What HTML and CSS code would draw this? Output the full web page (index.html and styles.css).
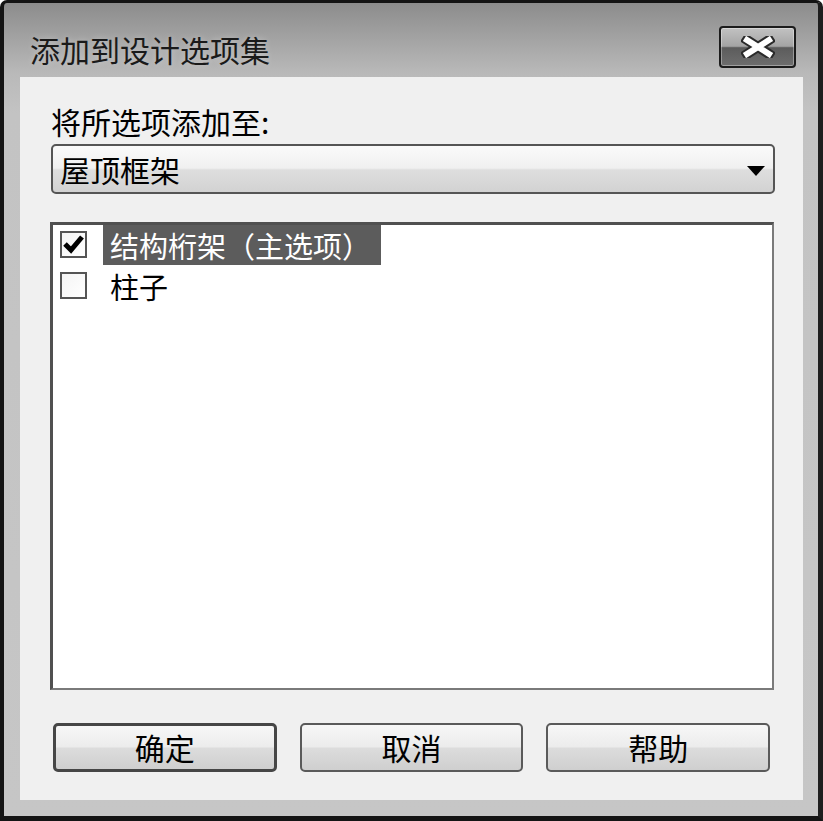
FILE: index.html
```html
<!DOCTYPE html>
<html lang="zh-CN">
<head>
<meta charset="utf-8">
<title>添加到设计选项集</title>
<link rel="stylesheet" href="styles.css">
</head>
<body>
<div class="window">
  <div class="titlebar">
    <div class="title">添加到设计选项集</div>
    <div class="close">
      <svg width="34" height="22" viewBox="0 0 34 22">
        <path d="M6 4 L28 18 M28 4 L6 18" stroke="#2a2a2a" stroke-width="10" stroke-linecap="square"/>
        <path d="M6 4 L28 18 M28 4 L6 18" stroke="#ffffff" stroke-width="6" stroke-linecap="square"/>
      </svg>
    </div>
  </div>
  <div class="client">
    <div class="label">将所选项添加至:</div>
    <div class="combo">
      <span class="combo-text">屋顶框架</span>
      <span class="arrow"></span>
    </div>
    <div class="listbox">
      <div class="row">
        <span class="check">
          <svg width="23" height="23" viewBox="0 0 23 23">
            <path d="M3 11 L9 17 L20 4" fill="none" stroke="#000" stroke-width="5"/>
          </svg>
        </span>
        <span class="item selected">结构桁架（主选项）</span>
      </div>
      <div class="row">
        <span class="check"></span>
        <span class="item">柱子</span>
      </div>
    </div>
    <div class="buttons">
      <div class="btn default">确定</div>
      <div class="btn">取消</div>
      <div class="btn">帮助</div>
    </div>
  </div>
</div>
</body>
</html>
```
FILE: styles.css
```css
html, body {
  margin: 0;
  padding: 0;
  background: #ffffff;
}
body {
  font-family: "Noto Sans CJK SC", "Noto Sans", sans-serif;
  color: #000;
}
.window {
  width: 823px;
  height: 821px;
  box-sizing: border-box;
  border-top: 3px solid #141414;
  border-left: 4px solid #141414;
  border-right: 5px solid #1e1e1e;
  border-bottom: 5px solid #141414;
  border-radius: 7px 7px 0 0;
  background: linear-gradient(to bottom, #8c8c8c 0px, #b9b9b9 70px, #c3c3c3 110px, #c6c6c6 100%);
  display: flex;
  flex-direction: column;
}
.titlebar {
  height: 74px;
  box-sizing: border-box;
  padding: 23px 22px 0 26px;
  display: flex;
  justify-content: space-between;
  align-items: flex-start;
}
.title {
  font-size: 30px;
  line-height: 46px;
  color: #1a1a1a;
  text-shadow: 0 0 6px rgba(255,255,255,0.35);
}
.close {
  width: 77px;
  height: 42px;
  box-sizing: border-box;
  border: 2px solid #1c1c1c;
  border-radius: 4px;
  background: linear-gradient(to bottom, #c2c2c2 0%, #a4a4a4 48%, #5c5c5c 52%, #6e6e6e 100%);
  box-shadow: inset 0 0 0 1px rgba(255,255,255,0.35);
  display: flex;
  align-items: center;
  justify-content: center;
}
.client {
  flex: 1;
  margin: 0 15px 16px 16px;
  background: #f0f0f0;
  padding: 26px 28px 28px 30px;
  display: flex;
  flex-direction: column;
}
.label {
  font-size: 30px;
  line-height: 36px;
  margin-left: 1px;
}
.combo {
  margin: 5px 0 0 1px;
  height: 50px;
  box-sizing: border-box;
  border: 2px solid #555555;
  border-radius: 5px;
  background: linear-gradient(to bottom, #fafafa 0%, #f0f0f0 48%, #dedede 52%, #d2d2d2 100%);
  display: flex;
  align-items: center;
  justify-content: space-between;
  padding: 0 8px 0 7px;
}
.combo-text {
  font-size: 30px;
  line-height: 36px;
}
.arrow {
  width: 0;
  height: 0;
  border-left: 9px solid transparent;
  border-right: 9px solid transparent;
  border-top: 10px solid #000;
  margin-top: 3px;
}
.listbox {
  margin-top: 28px;
  margin-right: 1px;
  height: 468px;
  box-sizing: border-box;
  border-top: 3px solid #505050;
  border-left: 3px solid #505050;
  border-right: 2px solid #7a7a7a;
  border-bottom: 2px solid #7a7a7a;
  background: #ffffff;
  padding: 0 0 0 7px;
}
.row {
  height: 41px;
  display: flex;
  align-items: flex-start;
}
.check {
  width: 27px;
  height: 27px;
  box-sizing: border-box;
  border: 2px solid #555555;
  background: linear-gradient(to bottom right, #f4f4f4, #ffffff);
  margin-top: 6px;
  margin-right: 16px;
  display: flex;
  align-items: center;
  justify-content: center;
}
.item {
  font-size: 29px;
  line-height: 40px;
  height: 40px;
  padding: 0 10px 0 7px;
}
.item.selected {
  background: #5c5c5c;
  color: #ffffff;
}
.buttons {
  margin: 33px 5px 0 3px;
  display: grid;
  grid-template-columns: 1fr 1fr 1fr;
  column-gap: 23px;
}
.btn {
  height: 49px;
  box-sizing: border-box;
  border: 2px solid #5a5a5a;
  border-radius: 5px;
  background: linear-gradient(to bottom, #f7f7f7 0%, #ececec 48%, #dcdcdc 52%, #cfcfcf 100%);
  font-size: 30px;
  line-height: 44px;
  text-align: center;
}
.btn.default {
  border: 3px solid #464646;
  line-height: 42px;
}
```
